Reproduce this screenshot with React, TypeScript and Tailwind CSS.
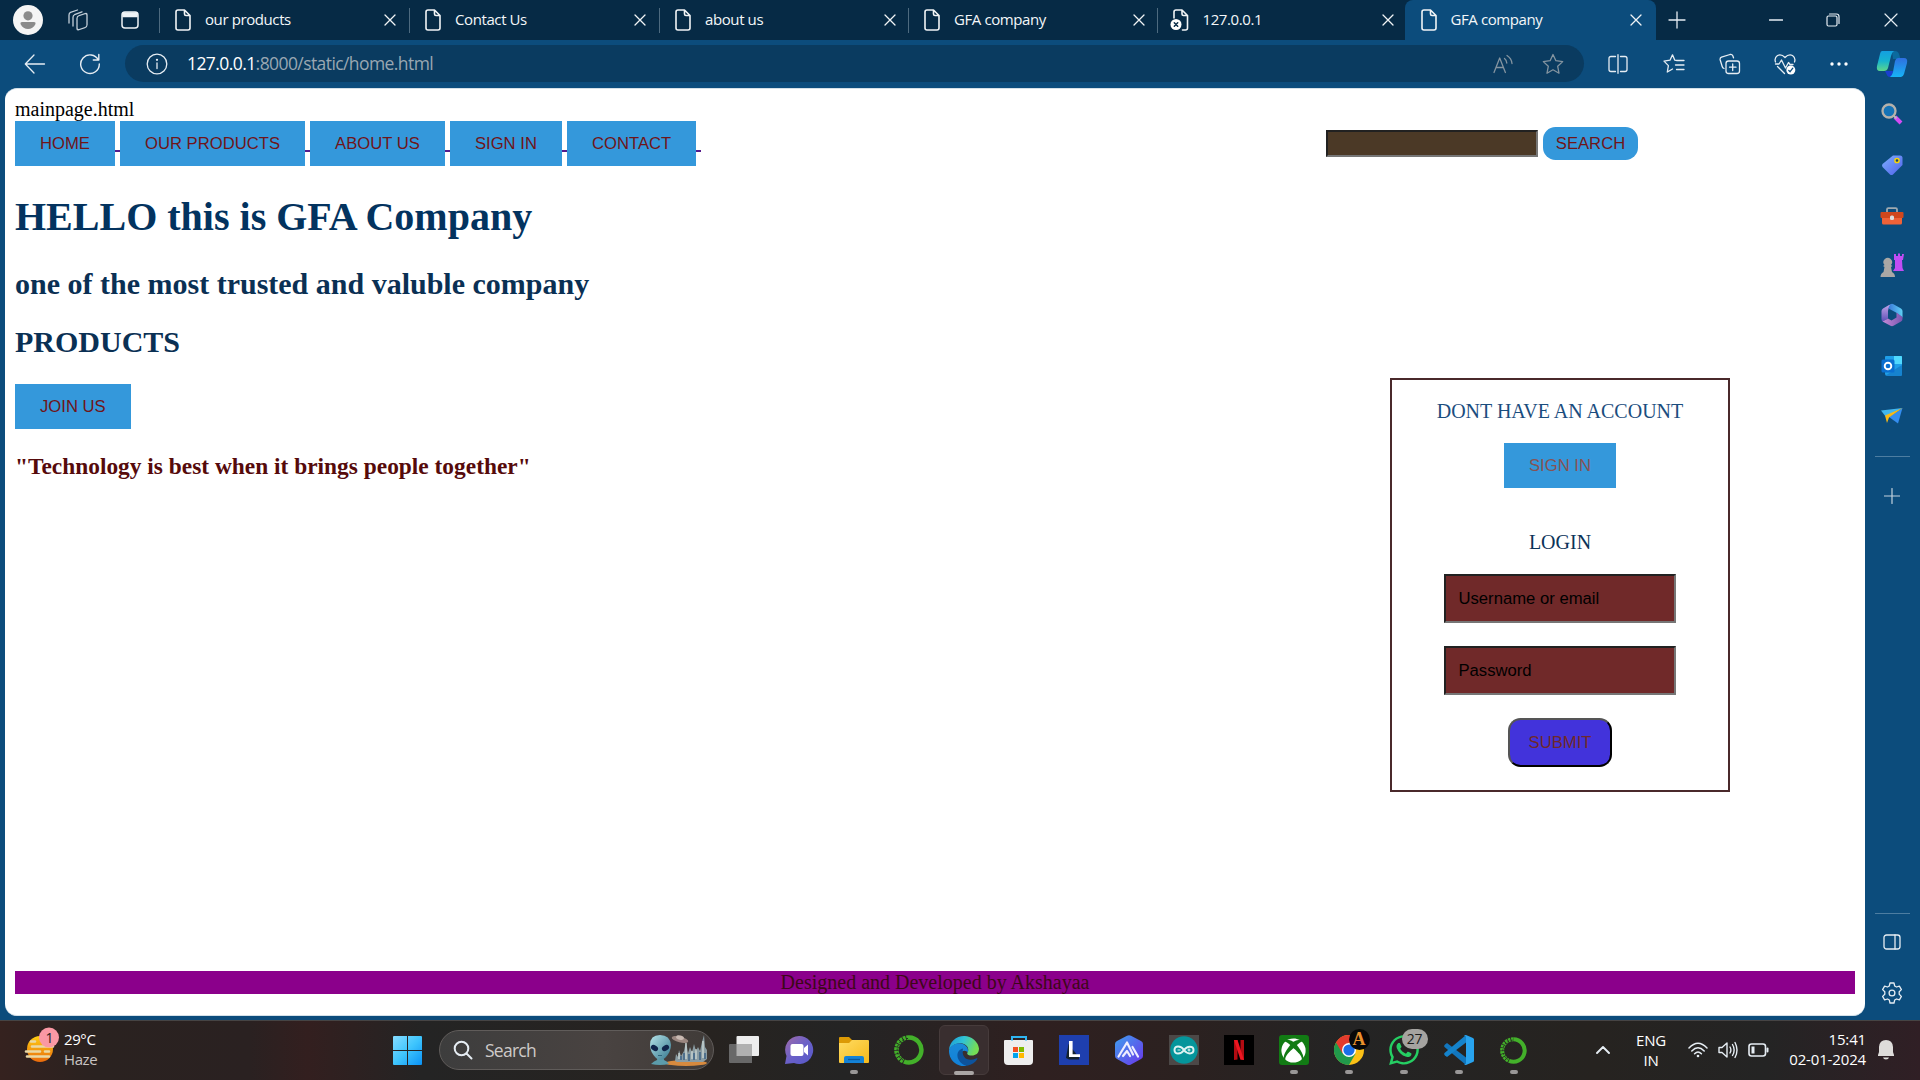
import React from 'react';
import { FaWhatsapp, FaXbox } from 'react-icons/fa';

type P = { children?: React.ReactNode; w?: number; h?: number; vb?: string; sw?: number; c?: string };
const Ico = ({ children, w = 24, h = 24, vb, sw = 1.3, c = 'text-[#e6edf3]' }: P) => (
  <svg width={w} height={h} viewBox={vb ?? `0 0 ${w} ${h}`} fill="none" stroke="currentColor" strokeWidth={sw}
    strokeLinecap="round" strokeLinejoin="round" className={`block shrink-0 ${c}`}>{children}</svg>
);
const Cell = ({ children, k }: { children?: React.ReactNode; k: string }) => (
  <div className={`flex shrink-0 items-center justify-center ${k}`}>{children}</div>
);
const Doc = () => (
  <Ico w={16} h={22} sw={1.6} c="text-[#f1f4f6]">
    <path d="M3 1h6.5L15 6.5V19a2 2 0 0 1-2 2H3a2 2 0 0 1-2-2V3a2 2 0 0 1 2-2zM9.5 1v4a1.5 1.5 0 0 0 1.500 1.500H15" />
  </Ico>
);
const ErrDoc = () => (
  <Ico w={20} h={22} sw={1.6} c="text-[#f1f4f6]">
    <path d="M4 9V3a2 2 0 0 1 2-2h6l5.500 5.500V19a2 2 0 0 1-2 2h-3M12 1v4a1.500 1.500 0 0 0 1.500 1.500h4" />
    <circle cx="6" cy="15.500" r="5.500" fill="#fff" stroke="none" />
    <path d="M4.300 13.800l3.400 3.400M7.700 13.800l-3.400 3.400" stroke="#062a45" strokeWidth="1.500" />
  </Ico>
);
const Close = () => <Ico w={12} h={12} sw={1.3} c="text-[#f1f4f6]"><path d="M1 1l10 10M11 1L1 11" /></Ico>;

const Tab = ({ title, active, err, k = '' }: { title: string; active?: boolean; err?: boolean; k?: string }) => (
  <div className={`flex h-10 shrink-0 items-center ${active ? 'w-[251px] rounded-t-lg bg-[#0c4c7c] pl-[16px]' : ''} ${k}`}>
    {!active && <div className="mr-[15px] h-[25px] w-px bg-[#4d6a7f]" />}
    <div className="flex w-[30px]">{err ? <div className="-ml-[3px]"><ErrDoc /></div> : <Doc />}</div>
    <div className="w-[179px] pb-0.5 text-[15px] leading-5 tracking-[-0.4px] text-[#f4f7f9]">{title}</div>
    <Close />
  </div>
);

const Btn = ({ children, k = 'text-[#6f1519]' }: { children: React.ReactNode; k?: string }) => (
  <span className={`inline-block h-[45px] shrink-0 bg-[#3498db] px-[25px] text-center font-['Liberation_Sans',Arial,sans-serif] text-[16.670px] leading-[45px] whitespace-nowrap ${k}`}>{children}</span>
);
const Gap = () => <span className="mb-[14px] h-0.5 w-[5px] shrink-0 self-end bg-[#551a8b]" />;

const TabStrip = () => (
  <div className="flex h-10 shrink-0 items-center bg-[#062a45]">
    <Cell k="w-14">
      <div className="flex h-[30px] w-[30px] items-center justify-center rounded-full bg-[#f5f5f5]">
        <svg width="16" height="18" viewBox="0 0 16 18" fill="#8b8b8b"><circle cx="8" cy="4.800" r="4.600" /><path d="M2 11h12q2 0 1.500 2C14 16.500 11 18 8 18S2 16.500.5 13Q0 11 2 11z" /></svg>
      </div>
    </Cell>
    <Cell k="w-11">
      <Ico w={22} h={22} c="text-[#c3cfd9]">
        <rect x="10" y="6" width="10" height="14" rx="2" transform="skewY(-18) translate(0 4.500)" />
        <path d="M6 17V8.500Q6 6.500 7.500 5.700L15 2.800M2 14V6Q2 4 3.500 3.300L10.500 1" />
      </Ico>
    </Cell>
    <Cell k="w-[59px]">
      <Ico w={18} h={18} sw={1.5} c="text-[#eef3f6]"><rect x="1" y="1" width="16" height="16" rx="3" /><path d="M2 2h14v3.500H2z" fill="currentColor" /></Ico>
    </Cell>
    <Tab title="our products" k="w-[250px]" />
    <Tab title="Contact Us" k="w-[250px]" />
    <Tab title="about us" k="w-[249px]" />
    <Tab title="GFA company" k="w-[248.500px]" />
    <Tab title="127.0.0.1" err k="w-[248px]" />
    <Tab title="GFA company" active />
    <Cell k="w-[43px]"><Ico w={18} h={18}><path d="M9 1v16M1 9h16" /></Ico></Cell>
    <div className="ml-auto flex w-[173px]">
      <Cell k="w-[57px]"><Ico w={14} h={14}><path d="M.5 7h13" /></Ico></Cell>
      <Cell k="w-[58px]"><Ico w={14} h={14} sw={1.2}><rect x="1" y="3" width="10" height="10" rx="1.500" /><path d="M3.500 1h7q2.500 0 2.500 2.500v7" /></Ico></Cell>
      <Cell k="w-[58px]"><Ico w={14} h={14} sw={1.2}><path d="M1 1l12 12M13 1L1 13" /></Ico></Cell>
    </div>
  </div>
);

const Toolbar = () => (
  <div className="flex h-12 shrink-0 items-center pb-[1px]">
    <Cell k="w-[70px]"><Ico w={22} h={22}><path d="M20.500 11h-19M10 2L1.300 11l8.700 9" /></Ico></Cell>
    <Cell k="w-[40px]"><Ico w={22} h={22} sw={1.4}><path d="M19.300 7A9.300 9.300 0 1 0 20.300 11M19.800 1.500v5.500h-5.500" /></Ico></Cell>
    <div className="ml-[15px] flex h-[37px] w-[1461px] items-center rounded-full bg-[#0a3b60]">
      <Cell k="ml-[21px] w-[22px]"><Ico w={22} h={22}><circle cx="11" cy="11" r="9.800" /><path d="M11 10v5.500" /><circle cx="11" cy="6.800" r=".5" fill="currentColor" /></Ico></Cell>
      <div className="ml-[19px] grow pb-px text-[17.500px] leading-6 tracking-[-0.58px] text-[#99a7b2]"><span className="text-white">127.0.0.1</span>:8000/static/home.html</div>
      <Cell k="w-[50px]"><Ico w={20} h={20} c="text-[#8494a0]"><path d="M1 18.500L6.700 4l5.700 14.500M3 13.500h7.500M11.500 4.500q2 1.500 2.300 4.500M14 1.500q4.500 2.800 5 8" /></Ico></Cell>
      <Cell k="mr-[6px] w-[50px]"><Ico w={22} h={22} c="text-[#8494a0]"><path d="M11 1.500l2.900 6.200 6.800.9-5 4.700 1.300 6.900-6-3.400-6 3.400 1.300-6.900-5-4.700 6.800-.9z" /></Ico></Cell>
    </div>
    <Cell k="ml-[6px] w-14"><Ico w={20} h={20}><path d="M7.500 2.500H3Q1 2.500 1 4.500v11q0 2 2 2h4.500M12.500 2.500H17q2 0 2 2v11q0 2-2 2h-4.500M10 .7v18.600" /></Ico></Cell>
    <Cell k="w-14"><Ico w={22} h={22}><path d="M14 7.500l-2.200-.3L9.500 1.800 7 7.200l-6 .9 4.400 4.500L4.300 19l5.200-3M13.500 7.500H21M12.500 12H21M13.500 16.500H21" /></Ico></Cell>
    <Cell k="w-[55px]"><Ico w={22} h={22}><rect x="7" y="8" width="13.500" height="12.500" rx="2.500" /><path d="M13.700 11v6.500M10.500 14.200H17M5 15.500Q3.500 15 3.200 13.500L1.200 7q-.5-2 1.300-2.800L11 1.500q2-.5 2.800 1.300l.7 2" /></Ico></Cell>
    <Cell k="w-14"><Ico w={22} h={22}><path d="M1.500 9Q0 5 3.500 2.500 7.500.8 11 4.500 14.500.8 18.500 2.500 22 5 20.500 9M1.500 11H5l2.500-4 4 8 3-5.500 1.500 2h3M3.500 13.500l7 7" /><circle cx="16.800" cy="17" r="4.500" fill="#fff" stroke="none" /><path d="M14.800 17.500l1.300 1.200 2.700-3.500" stroke="#0c4c7c" /></Ico></Cell>
    <Cell k="w-[52px]"><Ico w={18} h={6} sw={0}><g fill="#fff"><circle cx="2" cy="3" r="1.700" /><circle cx="9" cy="3" r="1.700" /><circle cx="16" cy="3" r="1.700" /></g></Ico></Cell>
  </div>
);

const LoginBox = () => (
  <div className="ml-[1375px] flex h-[414px] w-[340px] shrink-0 flex-col items-center border-2 border-[#4a292b]">
    <div className="mt-[20px] text-xl leading-[23px] text-[#1b4d7e]">DONT HAVE AN ACCOUNT</div>
    <div className="mt-[20px] h-[45px]"><Btn k="text-[#865254]">SIGN IN</Btn></div>
    <div className="mt-[43px] text-xl leading-[23px] text-[#0b3359]">LOGIN</div>
    <div className="mt-[20px] h-[49px] w-[232px] border-2 border-t-[#212121] border-r-[#767676] border-b-[#767676] border-l-[#212121] bg-[#702929] pl-[12.500px] font-['Liberation_Sans',Arial,sans-serif] text-[16.670px] leading-[45px] text-black">Username or email</div>
    <div className="mt-[23px] h-[49px] w-[232px] border-2 border-t-[#212121] border-r-[#767676] border-b-[#767676] border-l-[#212121] bg-[#702929] pl-[12.500px] font-['Liberation_Sans',Arial,sans-serif] text-[16.670px] leading-[45px] text-black">Password</div>
    <div className="mt-[23px] h-[49px] w-[104px] rounded-[12.500px] border-2 border-t-[#555] border-r-black border-b-black border-l-[#555] bg-[#4233db] text-center font-['Liberation_Sans',Arial,sans-serif] text-[16.670px] leading-[45px] text-[#702929]">SUBMIT</div>
  </div>
);

const Page = () => (
  <div className="ml-[5px] flex h-[928px] w-[1860px] shrink-0 flex-col overflow-hidden rounded-xl border-y border-[#d4e0e8] bg-white px-[10px] pt-[9px] font-['Liberation_Serif',serif] text-black">
    <div className="h-[23px] text-xl leading-[23px]">mainpage.html</div>
    <div className="flex h-[45px] shrink-0">
      <Btn>HOME</Btn><Gap /><Btn>OUR PRODUCTS</Btn><Gap /><Btn>ABOUT US</Btn><Gap /><Btn>SIGN IN</Btn><Gap /><Btn>CONTACT</Btn><Gap />
      <div className="mr-[217px] ml-auto flex">
        <div className="mt-[9px] h-[27px] w-[212px] border-2 border-t-[#212121] border-r-[#767676] border-b-[#767676] border-l-[#212121] bg-[#4b3926]" />
        <div className="mt-[6px] ml-[5px] h-[33px] w-[95px] rounded-[12.500px] bg-[#3498db] text-center font-['Liberation_Sans',Arial,sans-serif] text-[16.670px] leading-[33px] text-[#6f1519]">SEARCH</div>
      </div>
    </div>
    <h1 className="mt-[28px] h-[46px] shrink-0 text-[40px] leading-[46px] font-bold text-[#03335f]">HELLO this is GFA Company</h1>
    <h2 className="mt-[27px] h-[34px] shrink-0 text-[30px] leading-[34px] font-bold text-[#0a3054]">one of the most trusted and valuble company</h2>
    <h2 className="mt-[24px] h-[34px] shrink-0 text-[30px] leading-[34px] font-bold text-[#0a3054]">PRODUCTS</h2>
    <div className="mt-[25px] h-[45px] shrink-0"><Btn>JOIN US</Btn></div>
    <h3 className="mt-[24px] -mb-[102px] h-[27px] shrink-0 text-[23.400px] leading-[27px] font-bold text-[#560a0b]">"Technology is best when it brings people together"</h3>
    <LoginBox />
    <div className="mt-[179px] h-[23px] shrink-0 bg-[#8b008b] text-center text-xl leading-[23px] text-[#3e0718]">Designed and Developed by Akshayaa</div>
  </div>
);

const Sidebar = () => (
  <div className="flex w-[55px] shrink-0 flex-col items-center pr-px">
    <Cell k="h-12"><svg width="32" height="28" viewBox="0 0 32 28">
      <defs>
        <linearGradient id="cpA" x1="0" y1="0" x2="0" y2="1"><stop stopColor="#149fe0" /><stop offset=".5" stopColor="#16b3cf" /><stop offset="1" stopColor="#5ed68a" /></linearGradient>
        <linearGradient id="cpB" x1="0" y1="0" x2="0" y2="1"><stop stopColor="#2f6fe0" /><stop offset="1" stopColor="#17b4f7" /></linearGradient>
      </defs>
      <path d="M16 1h3q3 0 4 3l1.500 5H17z" fill="#0b6a9e" /><path d="M9 21h8l-1 6h-2q-2.500 0-3.500-3z" fill="#1a3fd0" />
      <path d="M6 1h12q-2 1-3 5l-3 12q-1 3-4 3H4q-4 0-3-5L4 4q.5-3 2-3z" fill="url(#cpA)" />
      <path d="M22 8h6q4 0 3 5l-3 11q-1 3-3 3H14q2-1 3-5l2-11q1-3 3-3z" fill="url(#cpB)" />
    </svg></Cell>
    <Cell k="mt-px h-[50px]"><svg width="22" height="22" viewBox="0 0 22 22"><path d="M14 14l6 6" stroke="#d44bf5" strokeWidth="4" /><path d="M12.500 12.500l3 3" stroke="#bbb" strokeWidth="2" /><circle cx="8" cy="8" r="6.500" fill="#1573b7" stroke="#b5b1ab" strokeWidth="2.300" /></svg></Cell>
    <Cell k="h-[51px]"><svg width="22" height="22" viewBox="0 0 22 22"><defs><linearGradient id="tg" x1="0" y1="0" x2="1" y2="1"><stop stopColor="#7db0ff" /><stop offset="1" stopColor="#5060ea" /></linearGradient></defs><path d="M12 1.500h7q2.500 0 2.500 2.500v7L12 20.500q-1.500 1-3 0L1.500 13q-1-1.500 0-3z" fill="url(#tg)" /><circle cx="16" cy="6.500" r="2.100" fill="#1b4568" stroke="#f7d30a" strokeWidth="1.500" /></svg></Cell>
    <Cell k="h-[51px]"><svg width="24" height="18" viewBox="0 0 24 18"><path d="M7 5V2.500Q7 1.200 8.300 1.200h7.400q1.300 0 1.300 1.300V5" fill="none" stroke="#9ea9b0" strokeWidth="1.800" /><rect x="2" y="9" width="20" height="8.500" rx="1.500" fill="#ef6238" /><rect x=".5" y="5" width="23" height="6" rx="1" fill="#d0471d" /><rect x="10" y="8.500" width="4" height="4.500" rx="1.500" fill="#ddd" /></svg></Cell>
    <Cell k="h-[49px] -mt-px mb-px"><svg width="24" height="24" viewBox="0 0 24 24"><path d="M14 1h2v2h2V.5h2V3h2V1h2l-1 6h-1l.5 8 1.500 3H13l2-3V7h-1z" fill="#c04df4" /><path d="M4.500 12A4.300 4.300 0 1 1 11 12l1.500 1-1.500 1 1 5q3 1.500 3 5H.5q0-3.500 3-5l1-5-1.500-1z" fill="#a9a7a5" /></svg></Cell>
    <Cell k="h-[50px]"><svg width="22" height="24" viewBox="0 0 22 24">
      <defs>
        <linearGradient id="mA" x1="0" y1="0" x2="0" y2="1"><stop stopColor="#c3a3e8" /><stop offset="1" stopColor="#5c50b8" /></linearGradient>
        <linearGradient id="mB" x1="0" y1="0" x2="1" y2="0"><stop stopColor="#3a78d8" /><stop offset="1" stopColor="#5fd0f5" /></linearGradient>
        <linearGradient id="mC" x1="0" y1="0" x2="1" y2="0"><stop stopColor="#c58ad8" /><stop offset="1" stopColor="#7a55b0" /></linearGradient>
      </defs>
      <path d="M8 2L2 5.500Q.5 6.500.5 8v8q0 1.500 1 2.500L7 15.500V8q0-3 3-6.500z" fill="url(#mA)" />
      <path d="M9.500 1.200q1.500-.8 3 0L20 5.500q1.500 1 1.500 2.500v6.500L15 9.500 7.500 5.500q.5-3 2-4.300z" fill="url(#mB)" />
      <path d="M21.500 14v2q0 1.500-1.500 2.500l-7.500 4.300q-1.500.8-3 0L1.500 18.500 7 15.500l3.500 2 5-3V9.500z" fill="url(#mC)" />
    </svg></Cell>
    <Cell k="h-[51px]"><svg width="22" height="22" viewBox="0 0 22 22"><rect x="4" y="1" width="17" height="19" rx="1" fill="#1f9fe8" /><path d="M13 1h7q1 0 1 1v7h-8z" fill="#50d9ff" /><path d="M21 10v10q0 1-1 1H4l9-6z" fill="#1683cf" /><rect x=".5" y="4.500" width="13" height="13" rx="1.500" fill="#0a6fd0" /><circle cx="7" cy="11" r="3.300" fill="none" stroke="#fff" strokeWidth="1.900" /></svg></Cell>
    <Cell k="h-[49px]"><svg width="22" height="18" viewBox="0 0 22 18"><path d="M0 3.500L21.500 1 5 10z" fill="#42b6ee" /><path d="M21.500 1L17 16.500 8 10z" fill="#348df0" /><path d="M4 8.500L21.500 1 8 10.500 6 16z" fill="#f9b916" /></svg></Cell>
    <div className="mt-[16px] h-px w-[35px] bg-[#4d7da1]" />
    <div className="mt-[31px]"><Ico w={16} h={16} sw={1.2} c="text-[#c3d2de]"><path d="M8 .5v15M.5 8h15" /></Ico></div>
    <div className="mt-auto h-px w-[35px] bg-[#4d7da1]" />
    <div className="mt-[20px]"><Ico w={18} h={16}><rect x="1" y="1" width="16" height="14" rx="2.500" /><path d="M12 1v14" /></Ico></div>
    <div className="mt-[32px] mb-[16px]"><Ico w={22} h={22}>
      <circle cx="11" cy="11" r="2.900" />
      <path d="M9 1h4l.7 3 1.800 1 2.900-.9 2 3.500-2.200 2.100v2.600l2.200 2.100-2 3.500-2.900-.9-1.800 1-.7 3H9l-.7-3-1.800-1-2.900.9-2-3.500 2.200-2.100V9.700L1.600 7.600l2-3.500 2.900.9 1.800-1z" />
    </Ico></div>
  </div>
);

const Anaconda = ({ s }: { s: number }) => (
  <svg width={s} height={s} viewBox="0 0 30 30" fill="none" stroke="#43b02a">
    <path d="M15 2.500A12.500 12.500 0 1 1 10 26.500" strokeWidth="4.500" />
    <path d="M15 2.500A12.500 12.500 0 0 0 10 26.500" strokeWidth="4.500" strokeDasharray="2.600 .8" />
    <path d="M14 3.500A11.500 11.500 0 0 0 9 25" strokeWidth="1" stroke="#222" strokeDasharray="2 2" />
  </svg>
);

type TaskProps = { children: React.ReactNode; run?: boolean; active?: boolean };
const Task = ({ children, run, active }: TaskProps) => (
  <div className="flex w-[55px] shrink-0 justify-center">
    <div className={`flex h-[50px] w-[50px] flex-col items-center rounded-md pt-[10px] ${active ? 'border border-[#463b3b] bg-[#392e2f] pt-[9px]' : ''}`}>
      <div className="relative flex h-[30px] w-[30px] shrink-0 items-center justify-center">{children}</div>
      {run && <div className="mt-[5px] h-1 w-2 rounded-full bg-[#999797]" />}
      {active && <div className="mt-[5px] h-1 w-5 shrink-0 rounded-full bg-[#aaa6a5]" />}
    </div>
  </div>
);

const Taskbar = () => (
  <div className="flex h-[60px] shrink-0 items-center overflow-hidden border-t border-[#464444] bg-[linear-gradient(90deg,#35221f_0,#2a2220_5%,#2a2121_13%,#331f1f_16%,#242424_22%,#272320_37%,#242424_44%,#2f2020_54%,#2b2120_62%,#242424_70%,#262320_83%,#242424_92%,#301f25_100%)] pb-px text-[15px] leading-5 text-white">
    <div className="ml-[24px] h-[30px] w-[40px]">
      <svg width="36" height="36" viewBox="0 0 36 36" className="-mt-[8px]">
        <defs><linearGradient id="sun" x1="0" y1="0" x2="0" y2="1"><stop stopColor="#ffcf12" /><stop offset="1" stopColor="#e96a0c" /></linearGradient></defs>
        <circle cx="16" cy="22" r="13" fill="url(#sun)" />
        <path d="M7 14.500h4M8 19.500h21M2 24.500h14M21 24.500h4M3 29.500h22" stroke="#ead9a5" strokeWidth="2.600" strokeLinecap="round" />
        <circle cx="25" cy="10.500" r="10" fill="#fa98a4" /><text x="25.500" y="15.500" textAnchor="middle" fontSize="14" fontFamily="Open Sans, sans-serif" fill="#222">1</text>
      </svg>
    </div>
    <div className="w-[329px] pb-[3px] tracking-[-0.4px]"><div>29°C</div><div className="text-[#c9c4c3]">Haze</div></div>
    <svg width="29" height="29" viewBox="0 0 29 29" className="shrink-0">
      <defs><linearGradient id="win" x1="0" y1="0" x2="1" y2="1"><stop stopColor="#86dcff" /><stop offset=".5" stopColor="#3fc5fd" /><stop offset="1" stopColor="#0a92f5" /></linearGradient></defs>
      <path d="M1 0h13v14H0V1q0-1 1-1zM15 0h13q1 0 1 1v13H15zM0 15h14v14H1q-1 0-1-1zM15 15h14v13q0 1-1 1H15z" fill="url(#win)" />
    </svg>
    <div className="ml-[17px] flex h-10 w-[275px] shrink-0 items-center rounded-full border border-[#605c5a] bg-[linear-gradient(90deg,#3d3d3d,#494341_60%,#403b38)]">
      <div className="ml-[13px]"><Ico w={20} h={20} sw={2}><circle cx="8.500" cy="8.500" r="6.800" /><path d="M13.500 13.500l5 5" /></Ico></div>
      <div className="ml-[12px] w-[163px] pb-px text-[17.500px] tracking-[-0.75px] text-[#cecac8]">Search</div>
      <svg width="61" height="32" viewBox="0 0 61 32">
        <defs><linearGradient id="al" x1="0" y1="0" x2="1" y2="1"><stop stopColor="#b5e3e8" /><stop offset="1" stopColor="#34778e" /></linearGradient></defs>
        <ellipse cx="38" cy="29" rx="21" ry="3" fill="#d78a3e" />
        <path d="M27 27l1-7 2 3 1-7 2 6 3-5 2-10 2 12 2-6 2 5 2-8 2 7 2-4 2 4 2-9 2-7 1 12 2 3v9l-4 3H29z" fill="#8a9ca3" />
        <path d="M38 9v16M44 17v8M48 15v10M55 7v17M31 19v6" stroke="#e3ece6" strokeWidth="1" /><path d="M36 19v7M46 19v7M52 18v8M41 20v7M33 22v4M57 19v6" stroke="#315a83" strokeWidth="1.300" />
        <path d="M10 22h5l1 4q3 1 5 4-9 2-18 0 3-3 6-4z" fill="#5c9cab" />
        <path d="M12 1q10 0 11 10 0 7-6 13-5 4-9 0-6-6-6-13Q2 1 12 1z" fill="url(#al)" />
        <ellipse cx="6.500" cy="14" rx="3.800" ry="2.700" transform="rotate(30 6.500 14)" fill="#10254c" /><ellipse cx="17.500" cy="14" rx="3.800" ry="2.700" transform="rotate(-30 17.500 14)" fill="#10254c" />
        <path d="M10 21.500h4" stroke="#2e6379" />
        <ellipse cx="32" cy="5.500" rx="8.500" ry="2.800" transform="rotate(14 32 5.500)" fill="#9b8780" /><ellipse cx="32" cy="3.600" rx="4" ry="2.200" transform="rotate(14 32 3.600)" fill="#c9bab2" />
      </svg>
    </div>
    <div className="ml-[2px] flex">
      <Task><svg width="30" height="30" viewBox="0 0 30 30"><rect x="7.500" y="1" width="22.500" height="20" rx="1" fill="#ededed" /><path d="M1 9h22v19H1q-1 0-1-1V10q0-1 1-1z" fill="#686868" /><path d="M7.500 9H23v12H7.500z" fill="#b0b0b0" /></svg></Task>
      <Task><svg width="30" height="30" viewBox="0 0 30 30"><defs><linearGradient id="tm" x1="0" y1="0" x2="1" y2="1"><stop stopColor="#a06ba8" /><stop offset=".5" stopColor="#6a60c8" /><stop offset="1" stopColor="#5558c9" /></linearGradient></defs><path d="M15 1a14 14 0 1 1-5 27l-9 1 1.500-8A14 14 0 0 1 15 1z" fill="url(#tm)" /><rect x="6.500" y="9" width="13" height="12" rx="2" fill="#fff" /><path d="M20 13l4-3.500v11L20 17z" fill="#fff" /></svg></Task>
      <Task run><svg width="30" height="30" viewBox="0 0 30 30"><defs><linearGradient id="fo" x1="0" y1="0" x2="1" y2="1"><stop stopColor="#ffdc62" /><stop offset="1" stopColor="#f6b91b" /></linearGradient></defs><path d="M0 3q0-1 1-1h9l3 3v6H0z" fill="#dc9a05" /><path d="M0 8h10l3-3h16q1 0 1 1v21q0 1-1 1H1q-1 0-1-1z" fill="url(#fo)" /><path d="M5 28v-5q0-2 2-2h16q2 0 2 2v5z" fill="#1482d6" /><path d="M9 24.500h12" stroke="#0b589c" strokeWidth="1.300" /></svg></Task>
      <Task><Anaconda s={30} /></Task>
      <Task active><svg width="30" height="30" viewBox="0 0 30 30">
        <defs>
          <linearGradient id="e1" x1="0" y1="0" x2="1" y2=".3"><stop stopColor="#1b97d8" /><stop offset=".5" stopColor="#30c3d5" /><stop offset="1" stopColor="#75dd55" /></linearGradient>
          <linearGradient id="e2" x1="0" y1="0" x2="0" y2="1"><stop stopColor="#1a8ad8" /><stop offset="1" stopColor="#1180d8" /></linearGradient>
        </defs>
        <path d="M15 0a15 15 0 0 1 15 12.500c0 5-3.500 7-7 7-4 0-5.500-1.500-4.500-3 2-3 0-8-5-9C8 6.500 3 9 0 14 .5 6 7 0 15 0z" fill="url(#e1)" />
        <path d="M0 14C2.500 7.500 10 6 14 8c4 1.800 6 5 4.500 8.500-.8-2.500-6-3-7.500 2-1 5 3 9.500 6.500 11.300A15 15 0 0 1 0 14z" fill="url(#e2)" />
        <path d="M14 12.500c-5 1-7 6-4.500 11 1.800 3.500 5 6 8.500 6.300 5-.8 8.500-3.300 10.500-7-.3-.8-1-.5-1.500-.2-8 3.400-15-.6-13-10.100z" fill="#0d539c" />
      </svg></Task>
      <Task><svg width="30" height="30" viewBox="0 0 30 30"><path d="M8 7V2h14v5" fill="none" stroke="#2fb5f1" strokeWidth="2" /><path d="M0 6q0-1 1-1h27q1 0 1 1v20q0 4-4 4H4q-4 0-4-4z" fill="#eee" /><path d="M8 5.500V4M22 5.500V4" stroke="#2fb5f1" strokeWidth="2" /><path d="M9 12h5v5H9z" fill="#f25022" /><path d="M15 12h5v5h-5z" fill="#7fba00" /><path d="M9 18h5v5H9z" fill="#00a4ef" /><path d="M15 18h5v5h-5z" fill="#ffb900" /></svg></Task>
      <Task><div className="flex h-[30px] w-[30px] items-center justify-center bg-[#1e3fae]"><svg width="16" height="20" viewBox="0 0 16 20"><path d="M2.500 4L0 18l3 1.500h10v-2z" fill="#14222e" /><path d="M3 1h3.600v13.300H14V17H3z" fill="#fff" /></svg></div></Task>
      <Task><svg width="28" height="30" viewBox="0 0 28 30"><defs><linearGradient id="hx" x1="0" y1="0" x2="1" y2="1"><stop stopColor="#3ea0ee" /><stop offset="1" stopColor="#6b35ea" /></linearGradient></defs><path d="M12 .7q2-1 4 0L26 6q2 1 2 3v12q0 2-2 3l-10 5.500q-2 1-4 0L2 24q-2-1-2-3V9q0-2 2-3z" fill="url(#hx)" /><path d="M3.500 21.500l8.500-14 6 12M8 21l4-5 3 5M17.500 12l5.500 9.500" fill="none" stroke="#eef" strokeWidth="2.200" strokeLinecap="round" strokeLinejoin="round" /></svg></Task>
      <Task><div className="flex h-[30px] w-[30px] items-center justify-center bg-[#4c4847]"><svg width="28" height="28" viewBox="0 0 28 28"><circle cx="14" cy="14" r="13.800" fill="#05959b" /><path d="M14 14C11 9.500 4.500 9 4.500 14S11 18.500 14 14s9.500-4.500 9.500 0-6.500 4.500-9.500 0z" fill="none" stroke="#def3f2" strokeWidth="2" /><path d="M7.500 14h3M17.500 14h3M19 12.500v3" stroke="#def3f2" strokeWidth="1.200" /></svg></div></Task>
      <Task><div className="flex h-[30px] w-[30px] items-center justify-center bg-black"><svg width="10" height="20" viewBox="0 0 10 20"><path d="M0 0h3.500v19.500L0 20zM6.500 0H10v20l-3.500-.5z" fill="#b30b12" /><path d="M0 0h3.500L10 20l-3.600-.5z" fill="#ed1621" /></svg></div></Task>
      <Task run><div className="flex h-[30px] w-[30px] items-center justify-center rounded-[3px] bg-[#127b14]"><FaXbox size={25} color="#fff" /></div></Task>
      <Task run>
        <svg width="30" height="30" viewBox="0 0 30 30"><circle cx="15" cy="15" r="15" fill="#fbc116" /><path d="M2 7.500A15 15 0 0 0 15 30l6.500-11.200L15 15z" fill="#219a4b" /><path d="M15 7.500h13A15 15 0 0 0 2 7.500l6.500 11z" fill="#e33b2e" /><circle cx="15" cy="15" r="7" fill="#fff" /><circle cx="15" cy="15" r="5.600" fill="#1b6fe9" /></svg>
        <div className="absolute -top-[6px] left-[15px] h-[21px] w-[21px] rounded-full bg-[#080808] text-center font-['Liberation_Serif',serif] text-[18px] leading-[21px] font-bold text-[#e8912d]">A</div>
      </Task>
      <Task run>
        <FaWhatsapp size={34} color="#25cf63" className="shrink-0" />
        <div className="absolute -top-[6px] left-[13px] h-5 w-[26px] rounded-full bg-[#a5a3a0] text-center text-sm leading-5 tracking-tight text-[#1c1c1c]">27</div>
      </Task>
      <Task run><svg width="30" height="30" viewBox="0 0 30 30"><path d="M1 9.500l2-1.500 19 14.500V30L.5 12q-.8-1.300.5-2.500z" fill="#1276bd" /><path d="M1 20.500L3 22 22 7.500V0L.5 18q-.8 1.300.5 2.500z" fill="#1583cb" /><path d="M22 0l7 3q1 .5 1 1.500v21q0 1-1 1.500l-7 3q-1 .3-2-1 2 1 2-1V2q0-2-2-1 1-1.300 2-1z" fill="#28a3ee" /></svg></Task>
      <Task run><Anaconda s={27} /></Task>
    </div>
    <div className="ml-auto flex items-center">
      <Ico w={14} h={8} sw={1.9}><path d="M1 7l6-6 6 6" /></Ico>
      <div className="ml-[21px] w-[40px] pb-[1px] text-center tracking-[-0.2px]"><div>ENG</div><div>IN</div></div>
      <div className="ml-[17px]"><Ico w={20} h={16} sw={1.5}><path d="M1 6q9-9.500 18 0M3.800 9q6.200-6.500 12.400 0M6.600 11.700q3.400-3.500 6.800 0" /><circle cx="10" cy="14" r="1.300" fill="currentColor" stroke="none" /></Ico></div>
      <div className="ml-[10px]"><Ico w={20} h={18} sw={1.4}><path d="M1 6.500h3L9 2v14l-5-4.500H1zM12 6q1.800 3 0 6M14.500 3.500q3.300 5.500 0 11M17 1.500q4 7.500 0 15" /></Ico></div>
      <div className="ml-[10px]"><Ico w={21} h={14} sw={1.6}><rect x="1" y="1" width="16.500" height="12" rx="2.500" /><path d="M3.500 3.500h3v7h-3z" fill="currentColor" stroke="none" /><path d="M19.500 5.500v3" strokeWidth="2" /></Ico></div>
      <div className="ml-[16px] w-[81px] pb-[3px] text-right tracking-[-0.15px]"><div>15:41</div><div className="whitespace-nowrap">02-01-2024</div></div>
      <div className="mr-[26px] ml-[12px]"><svg width="16" height="20" viewBox="0 0 16 20" fill="#dedcda"><path d="M8 0q6.500 0 7 7v5l1 3v1H0v-1l1-3V7Q1.500 0 8 0zM5 17.500h6q-.5 2-3 2t-3-2z" /></svg></div>
    </div>
  </div>
);

export default function App() {
  return (
    <div className="flex h-[1080px] w-[1920px] flex-col overflow-hidden bg-[#0c4c7c] font-['Open_Sans','Noto_Sans',sans-serif]">
      <TabStrip />
      <div className="flex h-[980px] shrink-0">
        <div className="flex w-[1865px] flex-col">
          <Toolbar />
          <Page />
        </div>
        <Sidebar />
      </div>
      <Taskbar />
    </div>
  );
}
